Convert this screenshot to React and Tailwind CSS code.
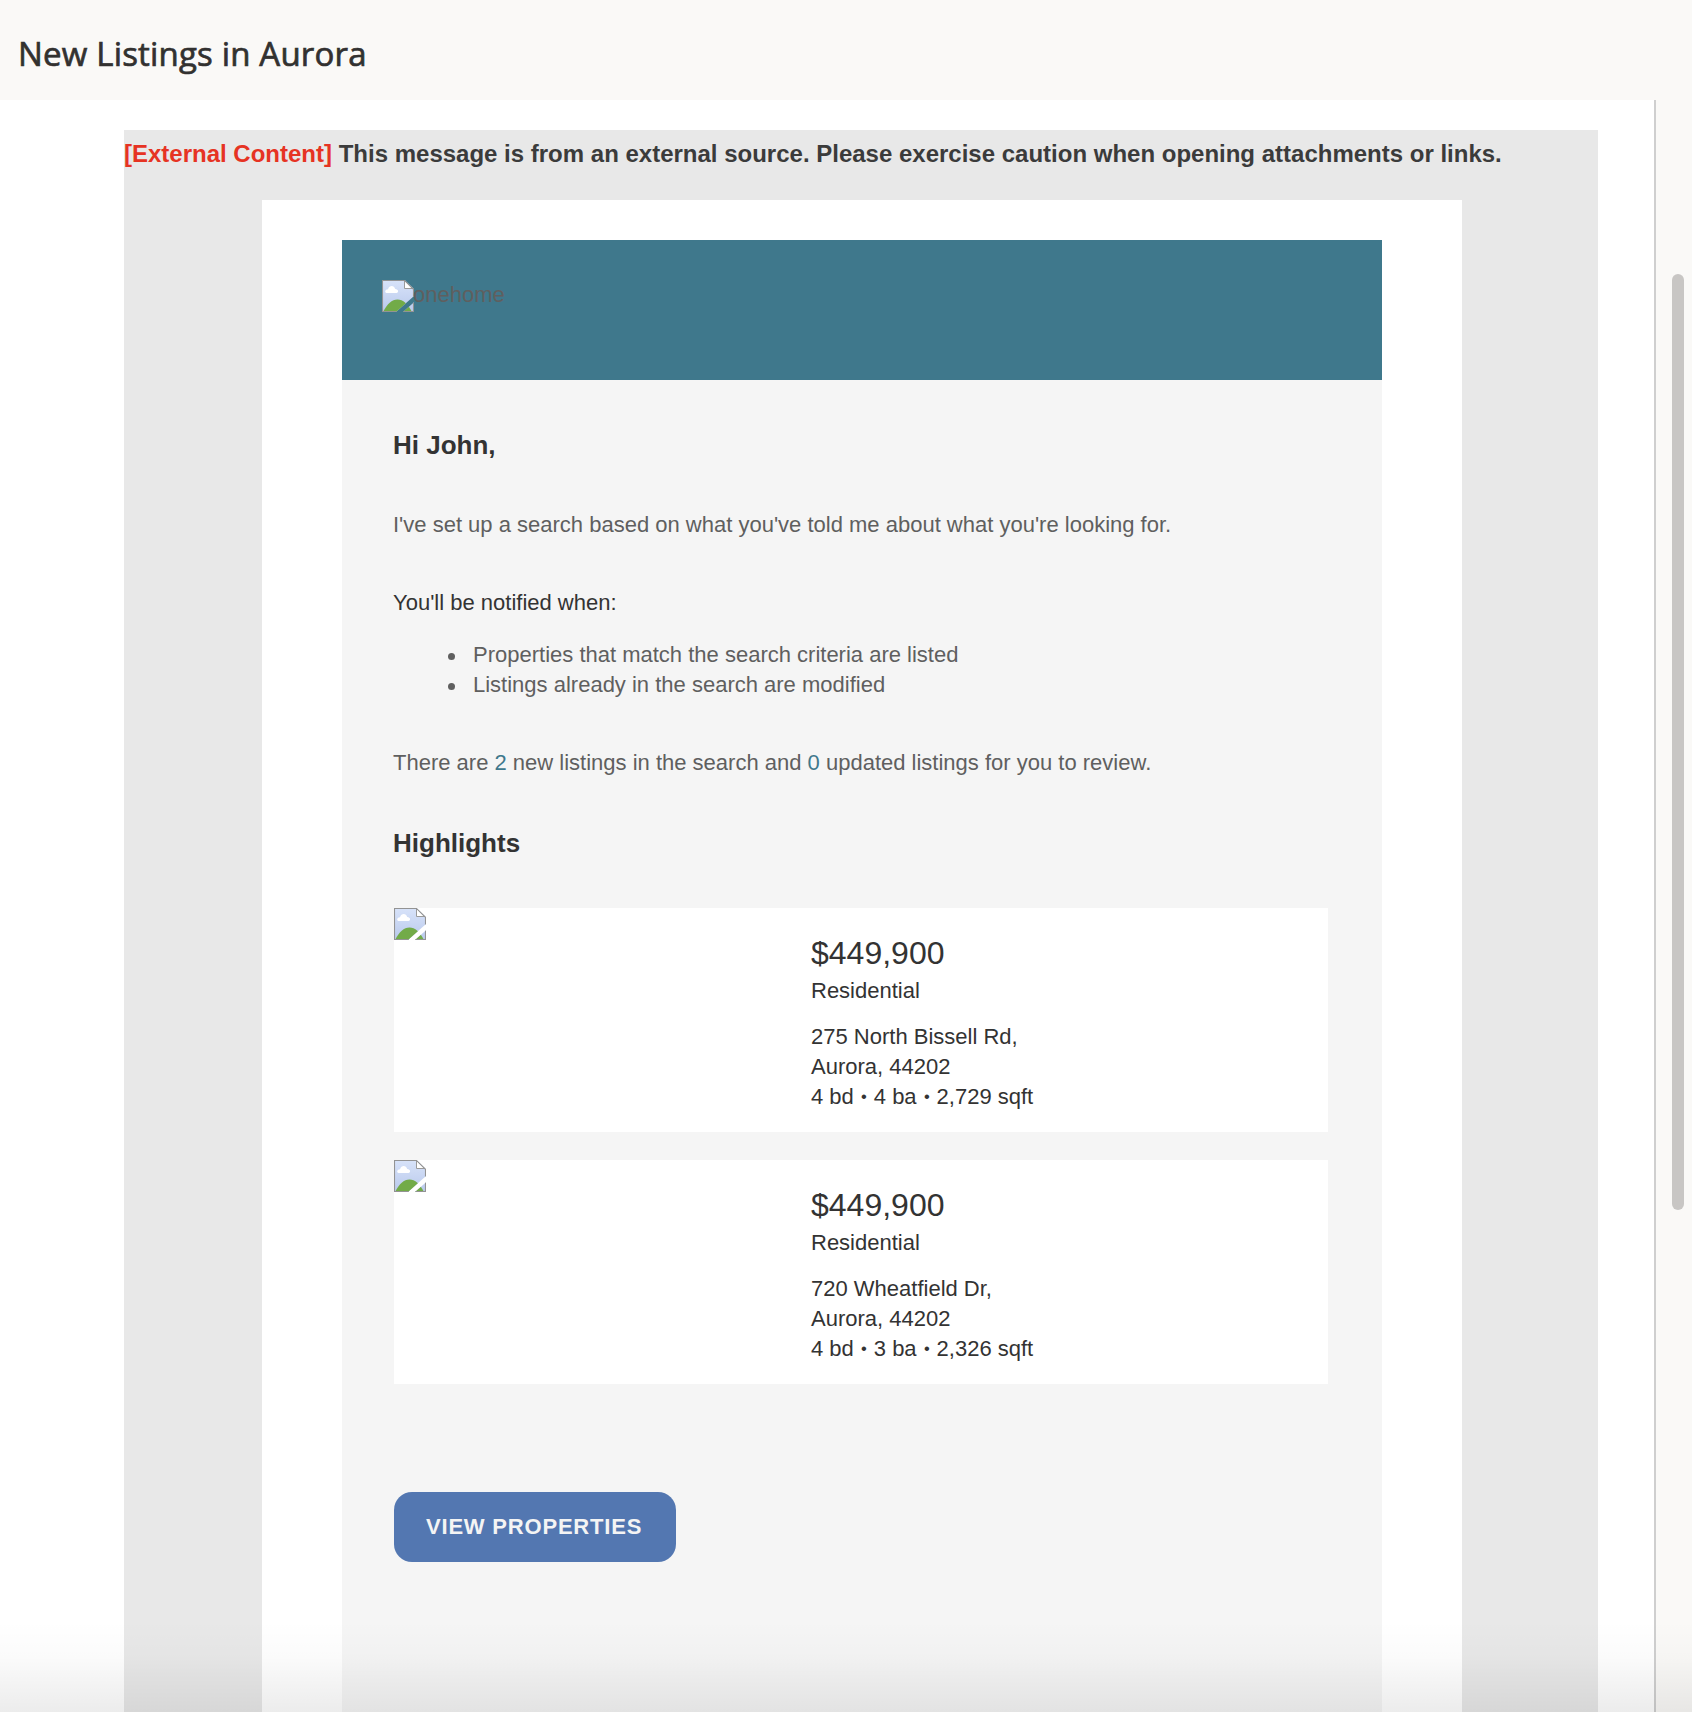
function BrokenImage({ id }) {
  return (
    <svg width="32" height="32" viewBox="0 0 32 32" className="block shrink-0">
      <defs>
        <linearGradient id={`sky-${id}`} x1="0" y1="0" x2="0" y2="1">
          <stop offset="0" stopColor="#d8e3f9" />
          <stop offset="1" stopColor="#b9c9ec" />
        </linearGradient>
        <clipPath id={`page-${id}`}>
          <path d="M0 0H23L32 9V16L14 32H0Z" />
          <path d="M32 22.3V32H21Z" />
        </clipPath>
      </defs>
      <g clipPath={`url(#page-${id})`}>
        <path d="M0 0H23L32 9V32H0Z" fill={`url(#sky-${id})`} />
        <path d="M1 32C5 24 10 19.5 15.5 19.5C21 19.5 26 24 30 32Z" fill="#72ab48" />
        <path d="M4.6 13C2.4 12.6 2.8 9.4 6 9.2C7.2 5 12.2 4.9 13.2 9.1C16.8 9.4 16.8 13 14.5 13Z" fill="#fff" />
        <path d="M22.5 0.5V8.5H31.5Z" fill="#fff" stroke="#9a9a9a" strokeWidth="1" />
        <path d="M0.5 0.5H22.7L31.5 9.3V31.5H0.5Z" fill="none" stroke="#939393" strokeWidth="1.1" />
      </g>
    </svg>
  );
}

const listings = [
  { id: "a", price: "$449,900", street: "275 North Bissell Rd,", city: "Aurora, 44202", facts: ["4 bd", "4 ba", "2,729 sqft"] },
  { id: "b", price: "$449,900", street: "720 Wheatfield Dr,", city: "Aurora, 44202", facts: ["4 bd", "3 ba", "2,326 sqft"] },
];

function Dot() {
  return (
    <>
      {" "}
      <span className="inline-block scale-75">•</span>{" "}
    </>
  );
}

function ListingCard({ item }) {
  return (
    <div className="flex h-56 bg-white text-[#333333]">
      <div className="w-[417px] shrink-0">
        <BrokenImage id={item.id} />
      </div>
      <div className="pt-[25px]">
        <div className="text-[32px] leading-10">{item.price}</div>
        <div className="mt-[3px]">Residential</div>
        <div className="mt-4">{item.street}</div>
        <div>{item.city}</div>
        <div>
          {item.facts[0]}
          <Dot />
          {item.facts[1]}
          <Dot />
          {item.facts[2]}
        </div>
      </div>
    </div>
  );
}

export default function App() {
  return (
    <div className="relative flex h-[1712px] w-[1692px] flex-col overflow-hidden bg-[#faf9f7] font-['Liberation_Sans',Arial,sans-serif] whitespace-nowrap">
      <header className="flex h-[100px] shrink-0 items-center pt-2 pl-[18px]">
        <h1 className="font-['Open_Sans',sans-serif] text-[33px] leading-[44px] font-normal tracking-[0.18px] text-[#323130] [-webkit-text-stroke:0.7px_#323130]">New Listings in Aurora</h1>
      </header>

      <div className="flex flex-1">
        <main className="flex w-[1656px] border-r-2 border-[#cfcfcf] bg-white pt-[30px] pl-[124px]">
          <div className="w-[1474px] bg-[#e8e8e8]">
            <div className="h-[70px] pt-2 text-2xl leading-8 font-bold text-[#3b3b3b]">
              <span className="text-[#e63323]">[External Content]</span> This message is from an external source. Please exercise caution when opening attachments or links.
            </div>
            <div className="ml-[138px] h-[1512px] w-[1200px] bg-white px-20 pt-10">
              <div className="flex h-[140px] bg-[#3f788c] pt-10 pl-10">
                <BrokenImage id="logo" />
                <span className="-ml-px text-[22px] leading-[30px] text-[#5f5f5f]">onehome</span>
              </div>
              <div className="h-[1332px] bg-[#f5f5f5] pt-[45px] pr-[54px] pl-[52px] text-[22px] leading-[30px] text-[#5f5f5f]">
                <div className="-ml-px">
                  <h2 className="text-[26px] leading-10 font-bold text-[#333333]">Hi John,</h2>
                  <p className="mt-[45px]">I've set up a search based on what you've told me about what you're looking for.</p>
                  <p className="mt-12 text-[#333333]">You'll be notified when:</p>
                  <ul className="mt-[22px]">
                    {["Properties that match the search criteria are listed", "Listings already in the search are modified"].map((t) => (
                      <li key={t} className="flex items-center pl-[55px]">
                        <span className="mt-[3px] mr-[18px] size-[7px] rounded-full bg-[#5f5f5f]" />
                        {t}
                      </li>
                    ))}
                  </ul>
                  <p className="mt-12">
                    There are <span className="text-[#3f788c]">2</span> new listings in the search and <span className="text-[#3f788c]">0</span> updated listings for you to review.
                  </p>
                  <h2 className="mt-[45px] text-[26px] leading-10 font-bold text-[#333333]">Highlights</h2>
                </div>
                <div className="mt-[45px] flex flex-col gap-7">
                  {listings.map((item) => (
                    <ListingCard key={item.id} item={item} />
                  ))}
                </div>
                <button className="mt-[108px] block h-[70px] w-[282px] rounded-[18px] bg-[#5377b1] pl-8 text-left text-[22px] font-bold tracking-[0.8px] text-[#f4f4f4]">
                  VIEW PROPERTIES
                </button>
              </div>
            </div>
          </div>
        </main>
        <div className="flex-1 pt-[174px] pl-4">
          <div className="h-[936px] w-3 rounded-full bg-[#c8c6c4]" />
        </div>
      </div>

      <div className="pointer-events-none absolute inset-x-0 bottom-0 h-[92px] bg-[linear-gradient(to_bottom,rgba(0,0,0,0),rgba(0,0,0,0.015)_40%,rgba(0,0,0,0.075))]" />
    </div>
  );
}
